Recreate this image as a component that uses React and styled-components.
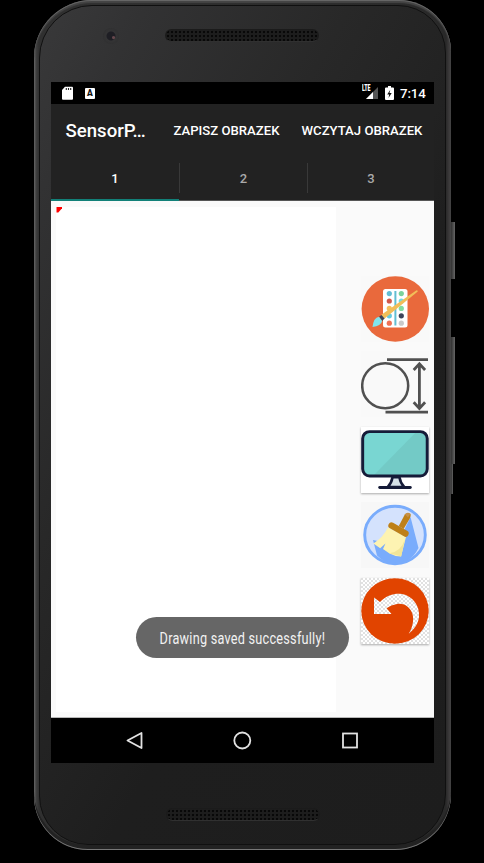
import React from 'react';
import styled, { createGlobalStyle } from 'styled-components';

const GlobalStyle = createGlobalStyle`
  * { box-sizing: border-box; }
  body { margin: 0; background: #000; font-family: Roboto, "Noto Sans", sans-serif; overflow: hidden; }
  svg { display: block; }
`;

const Stage = styled.main`
  width: 484px;
  height: 863px;
  padding-left: 34px;
  background: #000;
`;

const Phone = styled.div`
  position: relative;
  width: 417px;
  height: 850px;
  padding: 5px;
  border-radius: 58px 52px 56px 54px;
  background: linear-gradient(90deg, #6a6a6a 0, #404040 2px, #303030 5px, #292929 412px, #3b393a 415px, #444 417px);
  box-shadow: inset 0 1px 0 #666, inset 0 3px 1px #454545, inset 0 -1px 0 #777, inset 0 -5px 0 #222;
`;

const SideKey = styled.span`
  position: absolute;
  left: 417px;
  top: ${(p) => p.$top}px;
  width: ${(p) => p.$width || 4}px;
  height: ${(p) => p.$height}px;
  background: linear-gradient(90deg, #303030, #666);
`;

const Body = styled.div`
  height: 840px;
  padding: 76px 11px 0 12px;
  border: 1px solid #101010;
  border-radius: 53px 48px 51px 49px;
  background: linear-gradient(120deg, #39393a 0, #323233 12%, #282828 35%, #1e1e1e 62%, #1d1d1d 100%);
  display: flex;
  flex-direction: column;
`;

const TopHardware = styled.div`
  display: flex;
  align-items: center;
  height: 17px;
  margin: -55px 0 38px 51px;
  gap: 46px;
`;

const Camera = styled.span`
  width: 16px;
  height: 16px;
  border-radius: 50%;
  background: radial-gradient(circle at 66% 60%, #67484d 0 1px, transparent 2px),
    radial-gradient(circle, #1e1e24 0 4px, #343435 5px, #303031 8px);
`;

const Speaker = styled.span`
  display: block;
  width: 154px;
  height: 13px;
  border-radius: 7px;
  border: 1px solid #1b1b1b;
  border-bottom-color: #303030;
  background: radial-gradient(circle, #080808 0 1px, #1d1d1d 1.6px) 0 0 / 4px 4px;
`;

const BottomHardware = styled.div`
  display: flex;
  padding: 45px 0 0 114px;
`;

const Screen = styled.section`
  position: relative;
  width: 383px;
  height: 681px;
  margin-left: -1px;
  flex: none;
  display: flex;
  flex-direction: column;
  background: #fafafa;
`;

const StatusBar = styled.div`
  display: flex;
  align-items: center;
  height: 22px;
  flex: none;
  padding: 0 7px 0 10px;
  background: #000;
  color: #fff;
`;

const Clock = styled.time`
  width: 27px;
  margin-left: 5px;
  font-size: 13.3px;
  font-weight: 500;
  line-height: 23px;
  letter-spacing: -0.1px;
  white-space: nowrap;
`;

const Toolbar = styled.header`
  display: flex;
  align-items: center;
  height: 53px;
  flex: none;
  padding-left: 14.5px;
  background: #222;
  color: #fff;
`;

const Title = styled.h1`
  margin: 0;
  width: 108px;
  font-size: 18.6px;
  font-weight: 500;
  white-space: nowrap;
`;

const MenuAction = styled.button`
  width: 128px;
  padding: 0;
  border: 0;
  background: none;
  color: #fff;
  text-align: left;
  font: 500 13.15px Roboto, sans-serif;
  white-space: nowrap;
`;

const Tabs = styled.nav`
  display: grid;
  grid-template-columns: 128px 1px 127px 1px 126px;
  height: 44px;
  flex: none;
  background: #222;
  border-bottom: 1px solid #555;
`;

const Tab = styled.button`
  padding: 0;
  border: 0;
  background: ${(p) => (p.$active ? 'linear-gradient(#128078, #128078) 0 100% / 100% 2px no-repeat' : 'none')};
  color: ${(p) => (p.$active ? '#fff' : '#aaa')};
  font: 500 13px/43px Roboto, sans-serif;
  margin-bottom: ${(p) => (p.$active ? '-1px' : '0')};
  padding-bottom: ${(p) => (p.$active ? '1px' : '0')};
`;

const Divider = styled.span`
  height: 30px;
  margin: 6px 0;
  background: #393939;
`;

const Content = styled.div`
  display: flex;
  height: 517px;
  flex: none;
  padding: 6px 3px 5px 5px;
  background: #fafafa;
  border-bottom: 1px solid #b7b7b7;
`;

const DrawingSurface = styled.div`
  width: 280px;
  background: #fff;
`;

const Tools = styled.div`
  display: flex;
  flex-direction: column;
  gap: 9.5px;
  margin-left: 25px;
  padding-top: 68.6px;
`;

const Tool = styled.button`
  display: block;
  width: 68px;
  height: 66px;
  flex: none;
  border: 0;
  padding: 0;
  background: ${(p) => p.$fill || '#f9f9f9'};
  box-shadow: ${(p) => (p.$raised ? '0 1px 2px #aaa' : 'none')};
`;

const NavBar = styled.nav`
  display: flex;
  justify-content: space-between;
  align-items: center;
  height: 45px;
  flex: none;
  padding: 0 75px 0 74px;
  background: #000;
`;

const Toast = styled.div`
  position: absolute;
  left: 84.5px;
  top: 535px;
  width: 213px;
  height: 41px;
  display: flex;
  align-items: center;
  justify-content: center;
  border-radius: 21px;
  background: #666;
  color: #f2f2f2;
  font-size: 16px;
`;

const ToastText = styled.span`
  white-space: nowrap;
  letter-spacing: 0.3px;
  transform: translate(0, 1px) scaleX(0.793);
`;

const SdCard = () => (
  <svg width="12" height="15" viewBox="0 0 12 15">
    <path d="M4 .8h7q1 0 1 1v11q0 1-1 1H2q-1 0-1-1V4z" fill="#fff" />
    <path d="M5.3 2v2M7.5 2v2M9.7 2v2" stroke="#222" strokeWidth="1.1" />
  </svg>
);

const KeyboardBadge = styled.span`
  width: 10px;
  height: 11px;
  margin-left: 12px;
  border-radius: 1px;
  background: #fff;
  color: #111;
  text-align: center;
  font: 900 8.5px/11px Roboto, sans-serif;
`;

const Signal = styled.span`
  position: relative;
  display: block;
  width: 17px;
  height: 14px;
  margin-left: auto;
`;

const Lte = styled.span`
  position: absolute;
  left: 0;
  top: -2px;
  font: 900 8.5px/9px Roboto, sans-serif;
  letter-spacing: -0.2px;
  transform: scaleX(0.62);
  transform-origin: left;
`;

const Battery = () => (
  <svg width="9" height="15" viewBox="0 0 9 15">
    <path d="M3 0h3v1.5h2q1 0 1 1v10.5q0 1-1 1H1q-1 0-1-1V2.5q0-1 1-1h2z" fill="#fff" />
    <path d="M5.3 3.8 2.2 8.4h2l-.7 3.5 3.2-4.8H4.5z" fill="#111" />
  </svg>
);

const BatterySlot = styled.span`
  margin: 0 1px 0 6px;
`;

const PaletteIcon = () => {
  const left = ['#62bdd4', '#d0594b', '#f3c05d', '#65cbe0', '#ef7256'];
  const right = ['#7bd39b', '#70dbe7', '#83dca0', '#3c4359', '#c9c9c9'];
  return (
    <svg width="69" height="66" viewBox="0 0 69 66">
      <ellipse cx="34.3" cy="33" rx="33.7" ry="32.8" fill="#e9693c" />
      <rect x="22" y="13" width="24.5" height="38.5" rx="2.5" fill="#fff" />
      <path d="M34.4 15v34.5" stroke="#62bed2" strokeWidth="2" />
      {left.map((c, i) => <circle key={i} cx="28.3" cy={17.6 + i * 7.4} r="2.6" fill={c} />)}
      {right.map((c, i) => <circle key={i} cx="40.3" cy={17.6 + i * 7.4} r="2.6" fill={c} />)}
      <path d="M20 39 55.5 14.2q2 0 1 1.5L23.3 42.8z" fill="#f2be59" />
      <path d="m18 40.7 2.5-1.8 3.1 3.6-2.4 2.5z" fill="#3d4357" />
      <path d="M18 40.7Q12.5 41.5 11.5 51q8.5-.8 9.7-6z" fill="#7fe4ed" />
    </svg>
  );
};

const SizeIcon = () => (
  <svg width="69" height="66" viewBox="0 0 69 66" fill="none" stroke="#505050">
    <ellipse cx="24.2" cy="34.8" rx="23" ry="22.5" strokeWidth="2.5" />
    <path d="M26 8.6h41M24.5 61.2H67" strokeWidth="2.8" />
    <path d="M58.4 13v44.5M52.7 19l5.7-6.2 5.7 6.2M52.7 51.3l5.7 6.2 5.7-6.2" strokeWidth="2.8" />
  </svg>
);

const MonitorIcon = () => (
  <svg width="68" height="66" viewBox="0 0 69 66">
    <rect x="1.7" y="4.2" width="65.5" height="45" rx="7" fill="#79d6d2" />
    <path d="M56 4.5h4q7.2 0 7.2 7v31q0 7-7.2 7H12z" fill="#73cac6" />
    <rect x="1.7" y="4.2" width="65.5" height="45" rx="7" fill="none" stroke="#151b38" strokeWidth="3" />
    <path d="M32 50.5h7q1 6 5 10H27q4-4 5-10z" fill="#d5e1e8" stroke="#151b38" strokeWidth="2.6" />
    <path d="M19 60.8h31" stroke="#151b38" strokeWidth="3" strokeLinecap="round" />
  </svg>
);

const BroomIcon = () => (
  <svg width="69" height="66" viewBox="0 0 69 66">
    <ellipse cx="34" cy="33" rx="30.3" ry="28.7" fill="#d4e2fd" />
    <path d="m12 38 4 15.5Q24 62 35 61.5 50 61 57.5 46L49.5 15 36 43z" fill="#79acfc" />
    <ellipse cx="34" cy="33" rx="30.3" ry="28.7" fill="none" stroke="#79acfc" strokeWidth="2.9" />
    <path d="m37.8 24 6-11.5q2.5-3 5.8-.5.5 2-.8 4.5L42.6 27z" fill="#be8018" />
    <path d="m43.8 12.3q2.5-2.5 5.6-.6l-2.4 3.8z" fill="#ce9a60" opacity=".65" />
    <path d="M27 25.5 45 35 40 54.5q-6 0-11.5-3L22 47l2.5-5.5-5.3 4.8-6.8-4.8Q22 35.5 27 25.5z" fill="#fdf3b2" />
    <path d="m44 37-3.8 17.5-12-3.2Q40 50 44 37z" fill="#f1e598" />
    <path d="m30.5 23.6 14 8" stroke="#be8018" strokeWidth="6.3" strokeLinecap="round" />
  </svg>
);

const UndoIcon = () => (
  <svg width="68" height="66" viewBox="0 0 68 66">
    <defs>
      <pattern id="checks" width="4" height="4" patternUnits="userSpaceOnUse">
        <path d="M0 0h4v4H0z" fill="#fff" />
        <path d="M0 0h2v2H0zM2 2h2v2H2z" fill="#e1e1e1" />
      </pattern>
    </defs>
    <path d="M0 0h68v66H0z" fill="url(#checks)" />
    <ellipse cx="34" cy="33" rx="33.7" ry="32.8" fill="#e14400" />
    <path d="M13 19.5 19 24C27 16 35 15 41 16 52 18 59 28 58 39 57 47 53 51 47.7 55.7 52 49 53 42 51.5 36 49 28 42 25 36 26Q30 27 25.5 30.2L30.5 36H13z" fill="url(#checks)" />
  </svg>
);

const Marker = () => (
  <svg width="7" height="7" viewBox="0 0 7 7"><path d="M.5 0H6v1.2L2.3 5.5H.5z" fill="#f00" /></svg>
);

export default function App() {
  return (
    <Stage>
      <GlobalStyle />
      <Phone>
        <SideKey $top={222} $height={57} />
        <SideKey $top={337} $height={127} />
        <SideKey $top={464} $height={30} $width={2} />
        <Body>
          <TopHardware><Camera /><Speaker /></TopHardware>
          <Screen>
            <StatusBar>
              <SdCard />
              <KeyboardBadge>A</KeyboardBadge>
              <Signal>
                <svg width="17" height="14" viewBox="0 0 17 14">
                  <path d="M16 1v12H4z" fill="#555" />
                  <path d="M11 6v7H4z" fill="#fff" />
                </svg>
                <Lte>LTE</Lte>
              </Signal>
              <BatterySlot><Battery /></BatterySlot>
              <Clock>7:14</Clock>
            </StatusBar>
            <Toolbar>
              <Title>SensorP…</Title>
              <MenuAction>ZAPISZ OBRAZEK</MenuAction>
              <MenuAction>WCZYTAJ OBRAZEK</MenuAction>
            </Toolbar>
            <Tabs>
              <Tab $active>1</Tab>
              <Divider />
              <Tab>2</Tab>
              <Divider />
              <Tab>3</Tab>
            </Tabs>
            <Content>
              <DrawingSurface><Marker /></DrawingSurface>
              <Tools>
                <Tool><PaletteIcon /></Tool>
                <Tool><SizeIcon /></Tool>
                <Tool $raised $fill="#fff"><MonitorIcon /></Tool>
                <Tool $fill="#f7f7f7"><BroomIcon /></Tool>
                <Tool $raised><UndoIcon /></Tool>
              </Tools>
            </Content>
            <NavBar>
              <svg width="19" height="20" viewBox="0 0 19 20"><path d="M16.5 2v15L2.5 9.5z" fill="none" stroke="#e2e2e2" strokeWidth="1.8" strokeLinejoin="round" /></svg>
              <svg width="20" height="20" viewBox="0 0 20 20"><circle cx="9.3" cy="9.5" r="8" fill="none" stroke="#e2e2e2" strokeWidth="1.8" /></svg>
              <svg width="18" height="20" viewBox="0 0 18 20"><rect x="2" y="2.5" width="14" height="14" fill="none" stroke="#e2e2e2" strokeWidth="1.8" /></svg>
            </NavBar>
            <Toast><ToastText>Drawing saved successfully!</ToastText></Toast>
          </Screen>
          <BottomHardware><Speaker /></BottomHardware>
        </Body>
      </Phone>
    </Stage>
  );
}
